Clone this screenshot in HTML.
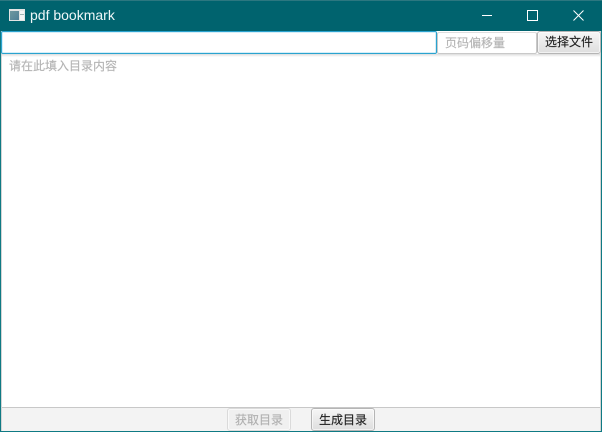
<!DOCTYPE html>
<html><head><meta charset="utf-8">
<style>
html,body{margin:0;padding:0;width:602px;height:432px;overflow:hidden;background:#fff}
*{box-sizing:border-box}
body{position:relative;font-family:"Liberation Sans","Noto Sans CJK SC",sans-serif}
.a{position:absolute}
.t{font-family:"Liberation Sans","Noto Sans CJK SC",sans-serif;font-size:12px;line-height:16px;white-space:nowrap;-webkit-text-stroke:.15px currentColor}
.btn{position:absolute;border:1px solid #b5b5b5;border-radius:3px;background:linear-gradient(#f6f6f6,#dedede);box-shadow:inset 0 0 0 1px rgba(255,255,255,.6);color:#222;text-align:center;font-family:"Liberation Sans","Noto Sans CJK SC",sans-serif;font-size:12px;-webkit-text-stroke:.15px currentColor}
</style></head>
<body>
<div class="a" style="left:0;top:0;width:602px;height:432px;background:#fff;border-left:1px solid #0f7a84;border-right:1px solid #0f7a84"></div>
<div class="a" style="left:1px;top:31px;width:1px;height:400px;background:#d4d4d4"></div>
<div class="a" style="left:600px;top:31px;width:1px;height:400px;background:#d4d4d4"></div>
<div class="a" style="left:0;top:0;width:602px;height:31px;background:#00636e;border-top:1px solid #2c7780"></div>
<div class="a" style="left:9px;top:9px;width:16px;height:12px;background:#e2e4e4"></div>
<div class="a" style="left:10px;top:11px;width:9px;height:9px;background:linear-gradient(135deg,#6f98a0,#4f7f96)"></div>
<div class="a" style="left:20px;top:11px;width:4px;height:9px;background:#f4f4f4"></div>
<div class="a" style="left:20px;top:14px;width:4px;height:1px;background:#9fb4b4"></div>
<div class="a t" style="left:30px;top:7px;font-size:14px;color:#eef7f8;line-height:17px;-webkit-text-stroke:0">pdf bookmark</div>
<svg class="a" style="left:470px;top:5px" width="125" height="20" fill="none" stroke="#fff" stroke-width="1">
<path d="M12 10.5H22"/><rect x="57.5" y="5.5" width="10" height="10"/><path d="M103.5 5.5L113.5 15.5M113.5 5.5L103.5 15.5"/>
</svg>
<div class="a" style="left:1px;top:31px;width:436px;height:23px;background:#fff;border:1px solid #2aa3cf;border-radius:2px;box-shadow:inset 0 0 0 1px #d5eef8"></div>
<div class="a" style="left:437px;top:32px;width:100px;height:22px;background:#fff;border:1px solid #c9c9c9;border-top-color:#ddd;border-radius:2px"></div>
<div class="a t" style="left:445px;top:35px;color:#b4b4b4">页码偏移量</div>
<div class="btn" style="left:537px;top:31px;width:64px;height:23px;line-height:21px">选择文件</div>
<div class="a" style="left:2px;top:54px;width:598px;height:3px;background:linear-gradient(#dcdcdc,#fff)"></div>
<div class="a t" style="left:9px;top:58px;color:#b4b4b4">请在此填入目录内容</div>
<div class="a" style="left:2px;top:407px;width:598px;height:24px;background:#f3f3f3;border-top:1px solid #c8c8c8"></div>
<div class="btn" style="left:227px;top:408px;width:64px;height:23px;line-height:22px;color:#b0b0b0;background:#f0f0f0;border-color:#dadada">获取目录</div>
<div class="btn" style="left:311px;top:408px;width:64px;height:23px;line-height:22px">生成目录</div>
<div class="a" style="left:0;top:431px;width:602px;height:1px;background:#0f7a84"></div>
</body></html>
